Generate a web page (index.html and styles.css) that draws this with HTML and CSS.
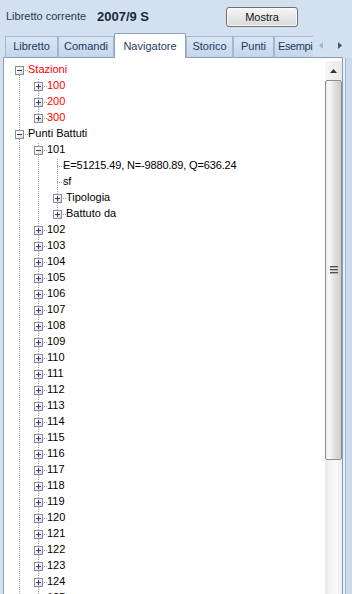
FILE: index.html
```html
<!DOCTYPE html>
<html lang="it">
<head>
    <meta charset="UTF-8">
    <meta name="viewport" content="width=device-width, initial-scale=1.0">
    <title>Navigatore</title>
    <link rel="stylesheet" href="styles.css">
</head>
<body>
    <!-- Intestazione libretto -->
    <div class="header">
        <span class="label">Libretto corrente</span>
        <span class="value">2007/9 S</span>
        <button class="btn">Mostra</button>
    </div>

    <!-- Schede -->
    <div class="tabbar">
        <div class="tabs">
            <div class="tab tab-libretto">Libretto</div>
            <div class="tab tab-comandi">Comandi</div>
            <div class="tab tab-navigatore selected">Navigatore</div>
            <div class="tab tab-storico">Storico</div>
            <div class="tab tab-punti">Punti</div>
            <div class="tab tab-esempi">Esempi</div>
        </div>
        <div class="tab-nav">
            <svg class="arrow-off" width="4" height="7" viewBox="0 0 4 7"><path d="M4 0V7L0 3.5Z"/></svg>
            <svg class="arrow-on" width="4" height="7" viewBox="0 0 4 7"><path d="M0 0V7L4 3.5Z"/></svg>
        </div>
    </div>

    <div class="main">
        <div class="panel">
            <div class="tree">
                <div class="row"><span class="g f"><i class="box minus"></i></span><span class="txt red">Stazioni</span></div>
                <div class="row"><span class="g v"></span><span class="g t"><i class="box plus"></i></span><span class="txt red">100</span></div>
                <div class="row"><span class="g v"></span><span class="g t"><i class="box plus"></i></span><span class="txt red">200</span></div>
                <div class="row"><span class="g v"></span><span class="g l"><i class="box plus"></i></span><span class="txt red">300</span></div>
                <div class="row"><span class="g t"><i class="box minus"></i></span><span class="txt">Punti Battuti</span></div>
                <div class="row"><span class="g v"></span><span class="g t"><i class="box minus"></i></span><span class="txt">101</span></div>
                <div class="row"><span class="g v"></span><span class="g v"></span><span class="g t"></span><span class="txt leaf">E=51215.49, N=-9880.89, Q=636.24</span></div>
                <div class="row"><span class="g v"></span><span class="g v"></span><span class="g t"></span><span class="txt leaf">sf</span></div>
                <div class="row"><span class="g v"></span><span class="g v"></span><span class="g t"><i class="box plus"></i></span><span class="txt">Tipologia</span></div>
                <div class="row"><span class="g v"></span><span class="g v"></span><span class="g l"><i class="box plus"></i></span><span class="txt">Battuto da</span></div>
                <div class="row"><span class="g v"></span><span class="g t"><i class="box plus"></i></span><span class="txt">102</span></div>
                <div class="row"><span class="g v"></span><span class="g t"><i class="box plus"></i></span><span class="txt">103</span></div>
                <div class="row"><span class="g v"></span><span class="g t"><i class="box plus"></i></span><span class="txt">104</span></div>
                <div class="row"><span class="g v"></span><span class="g t"><i class="box plus"></i></span><span class="txt">105</span></div>
                <div class="row"><span class="g v"></span><span class="g t"><i class="box plus"></i></span><span class="txt">106</span></div>
                <div class="row"><span class="g v"></span><span class="g t"><i class="box plus"></i></span><span class="txt">107</span></div>
                <div class="row"><span class="g v"></span><span class="g t"><i class="box plus"></i></span><span class="txt">108</span></div>
                <div class="row"><span class="g v"></span><span class="g t"><i class="box plus"></i></span><span class="txt">109</span></div>
                <div class="row"><span class="g v"></span><span class="g t"><i class="box plus"></i></span><span class="txt">110</span></div>
                <div class="row"><span class="g v"></span><span class="g t"><i class="box plus"></i></span><span class="txt">111</span></div>
                <div class="row"><span class="g v"></span><span class="g t"><i class="box plus"></i></span><span class="txt">112</span></div>
                <div class="row"><span class="g v"></span><span class="g t"><i class="box plus"></i></span><span class="txt">113</span></div>
                <div class="row"><span class="g v"></span><span class="g t"><i class="box plus"></i></span><span class="txt">114</span></div>
                <div class="row"><span class="g v"></span><span class="g t"><i class="box plus"></i></span><span class="txt">115</span></div>
                <div class="row"><span class="g v"></span><span class="g t"><i class="box plus"></i></span><span class="txt">116</span></div>
                <div class="row"><span class="g v"></span><span class="g t"><i class="box plus"></i></span><span class="txt">117</span></div>
                <div class="row"><span class="g v"></span><span class="g t"><i class="box plus"></i></span><span class="txt">118</span></div>
                <div class="row"><span class="g v"></span><span class="g t"><i class="box plus"></i></span><span class="txt">119</span></div>
                <div class="row"><span class="g v"></span><span class="g t"><i class="box plus"></i></span><span class="txt">120</span></div>
                <div class="row"><span class="g v"></span><span class="g t"><i class="box plus"></i></span><span class="txt">121</span></div>
                <div class="row"><span class="g v"></span><span class="g t"><i class="box plus"></i></span><span class="txt">122</span></div>
                <div class="row"><span class="g v"></span><span class="g t"><i class="box plus"></i></span><span class="txt">123</span></div>
                <div class="row"><span class="g v"></span><span class="g t"><i class="box plus"></i></span><span class="txt">124</span></div>
                <div class="row"><span class="g v"></span><span class="g t"><i class="box plus"></i></span><span class="txt">125</span></div>
            </div>

            <!-- Barra di scorrimento -->
            <div class="scrollbar">
                <div class="sb-up"><svg width="7" height="4" viewBox="0 0 7 4"><path d="M0 4L3.5 0L7 4Z"/></svg></div>
                <div class="sb-thumb"><span class="grip"></span></div>
                <div class="sb-track"></div>
            </div>
        </div>
        <div class="edge"></div>
    </div>
</body>
</html>
```

FILE: styles.css
```css
/* Finestra */
* {
    box-sizing: border-box;
}

html, body {
    margin: 0;
    width: 352px;
    height: 594px;
    overflow: hidden;
}

body {
    font-family: "Liberation Sans", Arial, sans-serif;
    font-size: 11px;
    background-color: #d3e0f0;
}

/* Intestazione */
.header {
    display: flex;
    align-items: center;
    height: 33px;
    padding-left: 6px;
}

.label {
    width: 91px;
    color: #26384f;
    line-height: 13px;
}

.value {
    font-size: 13px;
    font-weight: bold;
    color: #1c2a3d;
    line-height: 15px;
}

.btn {
    margin-left: auto;
    margin-right: 54px;
    width: 72px;
    height: 20px;
    padding: 0;
    font-family: inherit;
    font-size: 11px;
    color: #141414;
    border: 1px solid #6f6f6f;
    border-radius: 3px;
    background: linear-gradient(#f7f7f7, #e8e8e8 50%, #d9d9d9);
    box-shadow: inset 0 0 0 1px #fbfbfb;
}

/* Schede */
.tabbar {
    display: flex;
    height: 25px;
    width: 340px;
    margin-left: 3px;
    padding-left: 2px;
    background: linear-gradient(to top, #8d9db5 0 1px, transparent 1px);
}

.tabs {
    display: flex;
    align-items: flex-end;
    flex: none;
    width: 308px;
    height: 25px;
}

.tab {
    flex: none;
    height: 22px;
    padding-top: 3px;
    text-align: center;
    line-height: 13px;
    white-space: nowrap;
    color: #1f3a5e;
    border: 1px solid #a5b7d2;
    border-bottom-color: #8d9db5;
    background: linear-gradient(#dae6f5, #c4d5eb);
}

.tab.selected {
    height: 25px;
    padding-top: 6px;
    border-color: #8ea3c4;
    border-bottom: none;
    background: #fff;
}

.tab-libretto { width: 53px; }
.tab-comandi { width: 56px; }
.tab-navigatore { width: 72px; }
.tab-storico { width: 47px; }
.tab-punti { width: 41px; }

.tab-esempi {
    width: 39px;
    padding-left: 3px;
    text-align: left;
    letter-spacing: -0.4px;
    border-right: none;
}

.tab-nav {
    display: flex;
    align-items: center;
    gap: 15px;
    height: 24px;
    padding-left: 6px;
}

.arrow-off { fill: #a9b5c7; }
.arrow-on { fill: #4a5568; }

/* Pannello */
.main {
    display: flex;
}

.panel {
    display: flex;
    width: 340px;
    height: 560px;
    margin-left: 3px;
    padding-top: 3px;
    background: #fff;
    border: 1px solid #8d9db5;
    border-top: none;
}

.edge {
    width: 9px;
    background: linear-gradient(to right, #e7eef8 0 2px, #a6b8d3 2px 3px, #cbd9ec 3px);
}

/* Albero */
.tree {
    flex: 1;
    padding-top: 2px;
    padding-left: 6px;
    overflow: hidden;
}

.row {
    display: flex;
    align-items: flex-start;
    height: 16px;
}

.g {
    flex: none;
    display: flex;
    width: 19px;
    height: 16px;
    padding: 3px 0 0 5px;
    --dv: repeating-linear-gradient(to bottom, #a0a0a0 0 1px, transparent 1px 2px);
    --dh: repeating-linear-gradient(to right, #a0a0a0 0 1px, transparent 1px 2px);
}

.g.v {
    background: var(--dv) 9px 0 / 1px 16px no-repeat;
}

.g.t {
    background: var(--dv) 9px 0 / 1px 16px no-repeat,
                var(--dh) 9px 7px / 10px 1px no-repeat;
}

.g.l {
    background: var(--dv) 9px 0 / 1px 8px no-repeat,
                var(--dh) 9px 7px / 10px 1px no-repeat;
}

.g.f {
    background: var(--dv) 9px 8px / 1px 8px no-repeat,
                var(--dh) 9px 7px / 10px 1px no-repeat;
}

.box {
    display: block;
    width: 9px;
    height: 9px;
    border: 1px solid #8e8f90;
}

.box.minus {
    background: linear-gradient(#23408c, #23408c) 1px 3px / 5px 1px no-repeat,
                linear-gradient(to bottom right, #ffffff 30%, #d4d4d4);
}

.box.plus {
    background: linear-gradient(#23408c, #23408c) 1px 3px / 5px 1px no-repeat,
                linear-gradient(#23408c, #23408c) 3px 1px / 1px 5px no-repeat,
                linear-gradient(to bottom right, #ffffff 30%, #d4d4d4);
}

.txt {
    margin-left: -1px;
    line-height: 12px;
    white-space: nowrap;
    color: #000;
}

.txt.leaf {
    margin-left: -4px;
    letter-spacing: -0.15px;
}

.txt.red {
    color: #ff0000;
}

/* Barra di scorrimento */
.scrollbar {
    display: flex;
    flex-direction: column;
    flex: none;
    width: 17px;
}

.sb-up {
    display: flex;
    align-items: center;
    justify-content: center;
    height: 19px;
    background: linear-gradient(to right, #f6f6f6, #e9e9e9);
}

.sb-up svg {
    fill: #333;
}

.sb-thumb {
    display: flex;
    align-items: center;
    justify-content: center;
    height: 380px;
    border: 1px solid #8e8e8e;
    border-radius: 2px;
    background: linear-gradient(to right, #ebebeb 0%, #f9f9f9 22%, #e8e8e8 45%, #d6d6d6 80%, #cdcdcd 100%);
}

.grip {
    width: 8px;
    height: 8px;
    background: repeating-linear-gradient(to bottom, #4f4f4f 0 1px, #b3b3b3 1px 2px, transparent 2px 3px);
}

.sb-track {
    flex: 1;
    background: linear-gradient(to right, #ebe8eb 0%, #f5f3f5 40%, #faf9fa 70%, #eeebee 100%);
}
```
